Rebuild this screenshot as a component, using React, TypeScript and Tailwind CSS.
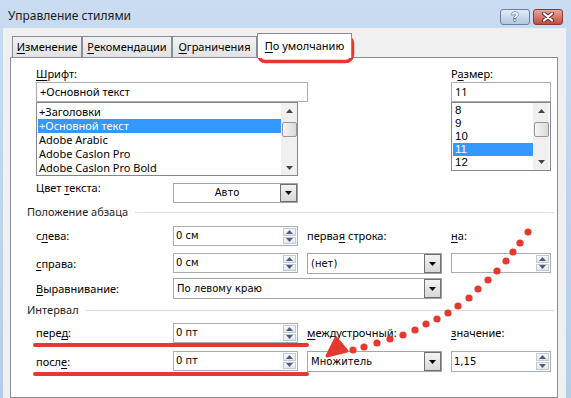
import React from 'react';

const ui = "font-['Noto_Sans','Liberation_Sans',sans-serif]";
const edit = "font-['DejaVu_Sans','Liberation_Sans',sans-serif]";

function U({ children }: { children: React.ReactNode }) {
  return <span className="underline decoration-1 underline-offset-[2px]">{children}</span>;
}

function Tri({ up, color = '#4e5d7d' }: { up?: boolean; color?: string }) {
  return (
    <svg width="7" height="4" viewBox="0 0 7 4">
      <path d={up ? 'M0 4 L3.5 0 L7 4 Z' : 'M0 0 L7 0 L3.5 4 Z'} fill={color} />
    </svg>
  );
}

function Spin({ value, className = '' }: { value?: string; className?: string }) {
  return (
    <div className={`flex bg-white border border-[#abadb3] ${className}`}>
      <div className={`flex-1 flex items-center pl-[2px] text-[10px] leading-[12px] ${edit}`}>{value}</div>
      <div className="w-[15px] flex flex-col gap-px p-px">
        <div className="flex-1 flex items-center justify-center border border-[#c2c8d4] bg-gradient-to-b from-[#f8f9fb] to-[#e2e6ee]">
          <Tri up />
        </div>
        <div className="flex-1 flex items-center justify-center border border-[#c2c8d4] bg-gradient-to-b from-[#f8f9fb] to-[#e2e6ee]">
          <Tri />
        </div>
      </div>
    </div>
  );
}

function Combo({ value, center, className = '' }: { value: string; center?: boolean; className?: string }) {
  return (
    <div className={`flex bg-white border border-[#a6a6a6] ${className}`}>
      <div className={`flex-1 flex items-center text-[10px] leading-[12px] ${edit} ${center ? 'justify-center' : 'pl-[3px]'}`}>{value}</div>
      <div className="w-[17px] border border-[#707070] bg-gradient-to-b from-[#f3f3f3] to-[#d8d8d8] flex items-center justify-center">
        <Tri color="#000" />
      </div>
    </div>
  );
}

function VScroll({ downH }: { downH: string }) {
  return (
    <div className="w-[16px] bg-[#f0f0f0] flex flex-col items-center">
      <div className="h-[16px] flex items-center justify-center">
        <Tri up color="#444" />
      </div>
      <div className="mt-[3px] w-[15px] h-[15px] border border-[#979797] rounded-[2px] bg-gradient-to-r from-[#f5f5f5] to-[#dadada]" />
      <div className="flex-1" />
      <div className={`${downH} flex items-center justify-center`}>
        <Tri color="#444" />
      </div>
    </div>
  );
}

function Tab({ w, children }: { w: string; children: React.ReactNode }) {
  return (
    <div className={`${w} h-[21px] border border-b-0 border-[#898c95] bg-gradient-to-b from-[#f2f2f2] to-[#e3e3e3] flex items-center justify-center`}>
      {children}
    </div>
  );
}

function Header({ text, mt }: { text: string; mt: string }) {
  return (
    <div className={`flex items-center pl-[16px] pr-[3px] h-[16px] ${mt}`}>
      <span className="text-[#1e1e1e]">{text}</span>
      <div className="flex-1 h-px bg-[#d5dfe5] ml-[7px]" />
    </div>
  );
}

const fonts = ['+Заголовки', '+Основной текст', 'Adobe Arabic', 'Adobe Caslon Pro', 'Adobe Caslon Pro Bold'];
const sizes = ['8', '9', '10', '11', '12'];

const dots: [number, number][] = [
  [528, 232], [520, 243], [513, 252], [506, 261], [497, 271], [488, 280], [478, 289],
  [469, 298], [458, 306], [448, 313], [437, 319], [426, 324], [415, 330], [403, 335],
  [390, 339], [377, 343], [364, 347], [353, 350],
];

export default function App() {
  return (
    <div className={`relative w-[571px] h-[398px] overflow-hidden flex flex-col bg-gradient-to-b from-[#c9dcf1] to-[#b5cde8] ${ui} text-[11px] leading-[16px] text-black`}>
      <div className="h-[28px] flex shrink-0">
        <div className="ml-[8px] mt-[8px] leading-[16px] text-[12px] text-[#1b1b1b]">Управление стилями</div>
        <div className="ml-auto mt-[9px] mr-[8px] flex gap-[3px] h-[16px]">
          <div className="w-[30px] rounded-[3px] border border-[#6d7f9c] bg-gradient-to-b from-[#e3ebf6] to-[#b4c7e1] flex items-center justify-center">
            <span className="text-[12px] font-bold leading-none text-white [-webkit-text-stroke:1px_#4a5469] [paint-order:stroke_fill] font-['Liberation_Sans',sans-serif]">?</span>
          </div>
          <div className="w-[30px] rounded-[3px] border border-[#8a3b34] bg-gradient-to-b from-[#e3a79e] to-[#c4473a] flex items-center justify-center">
            <svg width="14" height="10" viewBox="0 0 14 10">
              <path d="M3 1.5 L11 8.5 M11 1.5 L3 8.5" stroke="#5a2a25" strokeWidth="4" strokeLinecap="round" />
              <path d="M3 1.5 L11 8.5 M11 1.5 L3 8.5" stroke="#fff" strokeWidth="2.2" strokeLinecap="round" />
            </svg>
          </div>
        </div>
      </div>

      <div className="flex-1 ml-[3px] mr-[5px] bg-[#f0f0f0] pl-[7px] pr-[8px] pt-[5px] flex flex-col">
        <div className="h-[24px] ml-[2px] flex items-end relative z-10">
          <Tab w="w-[70px]"><U>И</U>зменение</Tab>
          <Tab w="w-[90px]"><U>Р</U>екомендации</Tab>
          <Tab w="w-[85px]"><U>О</U>граничения</Tab>
          <div className="w-[95px] h-[25px] -mb-px bg-white border border-b-0 border-[#898c95] flex items-center justify-center">
            <U>П</U>о умолчанию
          </div>
        </div>

        <div className="flex-1 bg-white border border-[#898c95] pt-[8px]">
          <div className="flex pl-[25px]">
            <div className="w-[272px]">
              <div className="leading-[16px]"><U>Ш</U>рифт:</div>
              <div className="h-[20px] border border-[#abadb3] flex items-center pl-[3px]">+Основной текст</div>
              <div className="w-[262px] h-[74px] border border-[#828790] flex">
                <div className="flex-1 pt-[2px] pl-px">
                  {fonts.map((f, i) => (
                    <div key={f} className={`h-[14px] leading-[14px] flex items-center pl-px ${i === 1 ? 'bg-[#3399ff] text-white' : ''}`}>{f}</div>
                  ))}
                </div>
                <VScroll downH="h-[14px]" />
              </div>
            </div>
            <div className="ml-[143px] w-[100px]">
              <div className="leading-[16px]">Р<U>а</U>змер:</div>
              <div className="h-[20px] border border-[#abadb3] flex items-center pl-[3px]">11</div>
              <div className="h-[69px] border border-[#828790] flex pr-px">
                <div className="flex-1 pt-px pl-px font-['Liberation_Sans',sans-serif] text-[11.5px]">
                  {sizes.map((s) => (
                    <div key={s} className={`h-[13px] leading-[13px] flex items-center pl-[2px] ${s === '11' ? 'bg-[#3399ff] text-white' : ''}`}>{s}</div>
                  ))}
                </div>
                <VScroll downH="h-[16px]" />
              </div>
            </div>
          </div>

          <div className="flex pl-[25px] mt-[7px] items-start">
            <div className="w-[137px] -mt-[3px] leading-[16px]">Цвет <U>т</U>екста:</div>
            <Combo className="w-[125px] h-[20px]" center value="Авто" />
          </div>

          <Header text="Положение абзаца" mt="mt-[1px]" />

          <div className="flex pl-[25px] mt-[6px] h-[20px] items-center">
            <div className="w-[137px]">с<U>л</U>ева:</div>
            <Spin className="w-[125px] h-[20px]" value="0 см" />
            <div className="ml-[9px] w-[135px]">перва<U>я</U> строка:</div>
            <div className="ml-[9px] w-[100px]"><U>н</U>а:</div>
          </div>
          <div className="flex pl-[25px] mt-[7px] h-[21px] items-center">
            <div className="w-[137px]"><U>с</U>права:</div>
            <Spin className="w-[125px] h-[20px] self-start" value="0 см" />
            <Combo className="ml-[9px] w-[135px] h-[21px]" value="(нет)" />
            <Spin className="ml-[9px] w-[100px] h-[20px] self-start" />
          </div>
          <div className="flex pl-[25px] mt-[4px] h-[21px] items-center">
            <div className="w-[137px]"><U>В</U>ыравнивание:</div>
            <Combo className="w-[269px] h-[21px]" value="По левому краю" />
          </div>

          <Header text="Интервал" mt="mt-[3px]" />

          <div className="flex pl-[25px] mt-[5px] h-[20px] items-center">
            <div className="w-[137px]">пере<U>д</U>:</div>
            <Spin className="w-[125px] h-[20px]" value="0 пт" />
            <div className="ml-[9px] w-[135px]"><U>м</U>еждустрочный:</div>
            <div className="ml-[9px] w-[100px]"><U>з</U>начение:</div>
          </div>
          <div className="flex pl-[25px] mt-[8px] h-[21px] items-center">
            <div className="w-[137px]">посл<U>е</U>:</div>
            <Spin className="w-[125px] h-[20px] self-start" value="0 пт" />
            <Combo className="ml-[9px] w-[135px] h-[21px]" value="Множитель" />
            <Spin className="ml-[9px] w-[100px] h-[21px]" value="1,15" />
          </div>
        </div>
      </div>

      <svg className="absolute inset-0 pointer-events-none" width="571" height="398" viewBox="0 0 571 398">
        <rect x="258.5" y="36.5" width="94" height="25" rx="7" fill="none" stroke="#e5392f" strokeWidth="3.5" />
        <line x1="35" y1="345" x2="307" y2="345" stroke="#e5392f" strokeWidth="4" strokeLinecap="round" />
        <line x1="35" y1="374" x2="307" y2="374" stroke="#e5392f" strokeWidth="4" strokeLinecap="round" />
        {dots.map(([x, y], i) => (
          <circle key={i} cx={x} cy={y} r="3.6" fill="#e5392f" />
        ))}
        <path d="M336 338 L347 351 L327 356 Z" fill="#e5392f" stroke="#e5392f" strokeWidth="3" strokeLinejoin="round" />
      </svg>
    </div>
  );
}
